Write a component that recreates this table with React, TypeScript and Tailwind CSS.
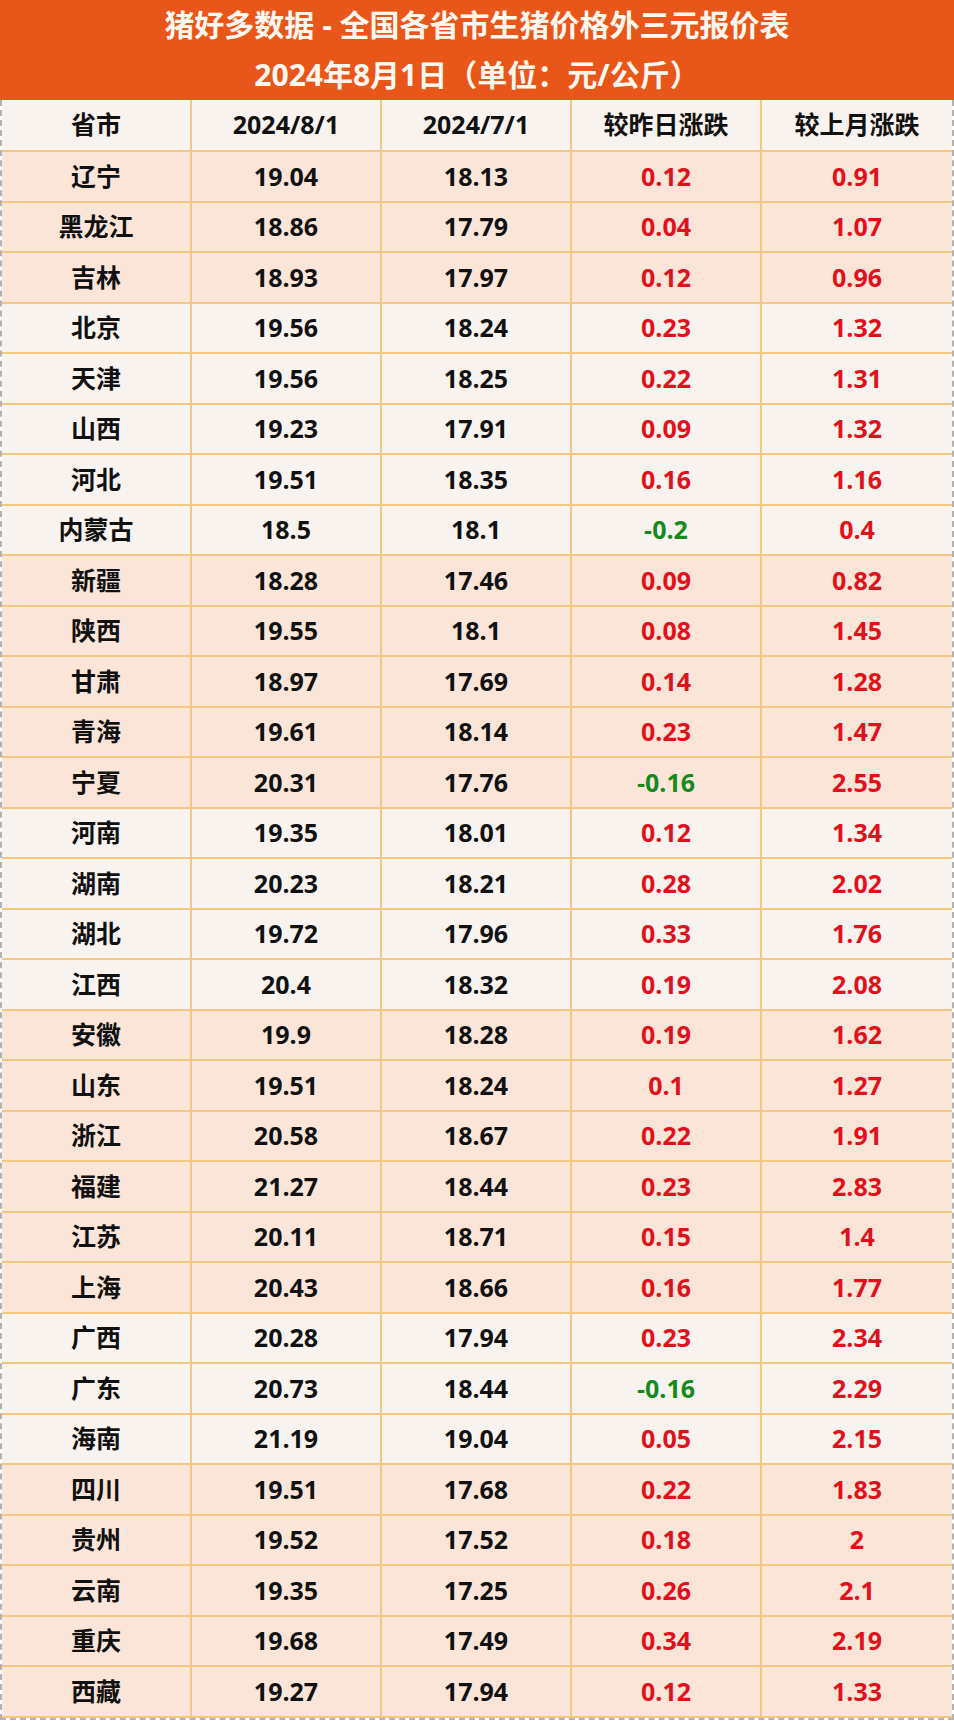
const rows: [string, string, string, string, string, boolean][] = [
  ["辽宁", "19.04", "18.13", "0.12", "0.91", true],
  ["黑龙江", "18.86", "17.79", "0.04", "1.07", true],
  ["吉林", "18.93", "17.97", "0.12", "0.96", true],
  ["北京", "19.56", "18.24", "0.23", "1.32", false],
  ["天津", "19.56", "18.25", "0.22", "1.31", false],
  ["山西", "19.23", "17.91", "0.09", "1.32", false],
  ["河北", "19.51", "18.35", "0.16", "1.16", false],
  ["内蒙古", "18.5", "18.1", "-0.2", "0.4", false],
  ["新疆", "18.28", "17.46", "0.09", "0.82", true],
  ["陕西", "19.55", "18.1", "0.08", "1.45", true],
  ["甘肃", "18.97", "17.69", "0.14", "1.28", true],
  ["青海", "19.61", "18.14", "0.23", "1.47", true],
  ["宁夏", "20.31", "17.76", "-0.16", "2.55", true],
  ["河南", "19.35", "18.01", "0.12", "1.34", false],
  ["湖南", "20.23", "18.21", "0.28", "2.02", false],
  ["湖北", "19.72", "17.96", "0.33", "1.76", false],
  ["江西", "20.4", "18.32", "0.19", "2.08", false],
  ["安徽", "19.9", "18.28", "0.19", "1.62", true],
  ["山东", "19.51", "18.24", "0.1", "1.27", true],
  ["浙江", "20.58", "18.67", "0.22", "1.91", true],
  ["福建", "21.27", "18.44", "0.23", "2.83", true],
  ["江苏", "20.11", "18.71", "0.15", "1.4", true],
  ["上海", "20.43", "18.66", "0.16", "1.77", true],
  ["广西", "20.28", "17.94", "0.23", "2.34", false],
  ["广东", "20.73", "18.44", "-0.16", "2.29", false],
  ["海南", "21.19", "19.04", "0.05", "2.15", false],
  ["四川", "19.51", "17.68", "0.22", "1.83", true],
  ["贵州", "19.52", "17.52", "0.18", "2", true],
  ["云南", "19.35", "17.25", "0.26", "2.1", true],
  ["重庆", "19.68", "17.49", "0.34", "2.19", true],
  ["西藏", "19.27", "17.94", "0.12", "1.33", true],
];

function Cell({ children, color = "text-[#111111]", last = false }: { children: React.ReactNode; color?: string; last?: boolean }) {
  return (
    <div
      className={`flex items-center justify-center border-b-2 border-[#f5c67f] ${last ? "" : "border-r-2"} ${color}`}
    >
      {children}
    </div>
  );
}

function changeColor(v: string) {
  return v.startsWith("-") ? "text-[#168a1c]" : "text-[#e2101b]";
}

export default function App() {
  return (
    <div
      className="w-[954px] bg-white font-bold"
      style={{ fontFamily: '"Open Sans", "Noto Sans CJK SC", sans-serif' }}
    >
      <div className="flex h-[100px] flex-col items-center justify-center bg-[#e9561a] text-[30px] leading-[50px] text-[#fff8f1]">
        <div>猪好多数据 - 全国各省市生猪价格外三元报价表</div>
        <div>2024年8月1日（单位：元/公斤）</div>
      </div>
      <div className="border-x-2 border-b-2 border-dashed border-[#b5b1ae] text-[25px]">
        <div className="grid h-[52px] grid-cols-5 bg-[#f9f3ef]">
          <Cell>省市</Cell>
          <Cell>2024/8/1</Cell>
          <Cell>2024/7/1</Cell>
          <Cell>较昨日涨跌</Cell>
          <Cell last>较上月涨跌</Cell>
        </div>
        {rows.map(([name, a, b, d, m, pink]) => (
          <div
            key={name}
            className={`grid h-[50.5px] grid-cols-5 ${pink ? "bg-[#fbe5d9]" : "bg-[#f9f3ef]"}`}
          >
            <Cell>{name}</Cell>
            <Cell>{a}</Cell>
            <Cell>{b}</Cell>
            <Cell color={changeColor(d)}>{d}</Cell>
            <Cell color={changeColor(m)} last>
              {m}
            </Cell>
          </div>
        ))}
      </div>
    </div>
  );
}
